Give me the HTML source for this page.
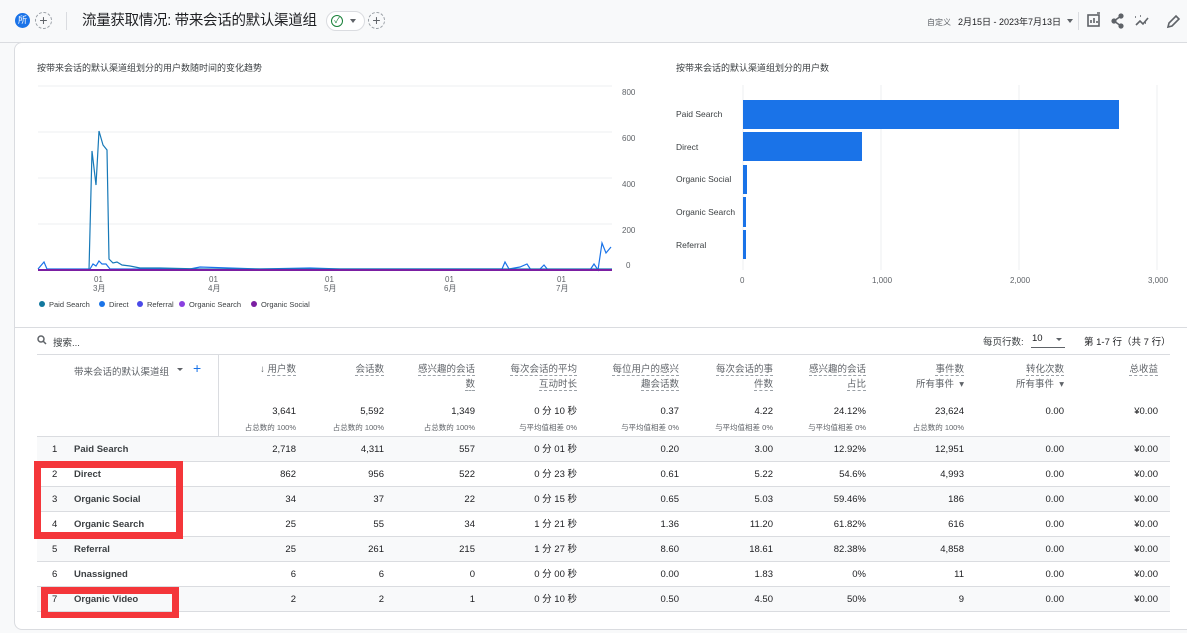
<!DOCTYPE html>
<html><head><meta charset="utf-8"><style>
*{margin:0;padding:0;box-sizing:border-box}
body{width:1187px;height:633px;overflow:hidden;background:#f8f9fa;font-family:"Liberation Sans","Noto Sans CJK SC",sans-serif;color:#202124;position:relative}
.a{position:absolute;white-space:nowrap}
.card{position:absolute;left:14px;top:42px;width:1190px;height:588px;background:#fff;border:1px solid #dadce0;border-radius:8px 0 0 8px}
.s{font-size:9px;color:#3c4043}
.hd{font-size:9.5px;color:#5f6368;text-align:right;line-height:15px}
.hd span{border-bottom:1px dashed #9aa0a6}
.row{position:absolute;left:37px;width:1133px;height:25px;border-bottom:1px solid #dadce0;font-size:9.5px}
.row div{position:absolute;top:7px;line-height:12px;white-space:nowrap}
.full{position:absolute;left:0;width:1187px;font-size:9.5px;line-height:12px}
</style></head><body>
<div class="a" style="left:15px;top:13px;width:15px;height:15px;border-radius:50%;background:#1a73e8;color:#fff;font-size:9px;text-align:center;line-height:15px">所</div>
<div class="a" style="left:35px;top:12px;width:17px;height:17px;border-radius:50%;border:1px dashed #9aa0a6;color:#5f6368;font-size:14px;text-align:center;line-height:14px">+</div>
<div class="a" style="left:66px;top:12px;width:1px;height:18px;background:#dadce0"></div>
<div class="a" style="left:82px;top:11px;font-size:14.5px;line-height:20px;color:#202124;letter-spacing:-0.3px">流量获取情况: 带来会话的默认渠道组</div>
<div class="a" style="left:326px;top:11px;width:39px;height:20px;border:1px solid #dadce0;border-radius:10px;background:#fff"></div>
<div class="a" style="left:331px;top:15px;width:12px;height:12px;border-radius:50%;border:1.5px solid #188038;color:#188038;font-size:8px;line-height:9px;text-align:center">✓</div>
<div class="a" style="left:350px;top:19px;border-left:3px solid transparent;border-right:3px solid transparent;border-top:4px solid #5f6368"></div>
<div class="a" style="left:368px;top:12px;width:17px;height:17px;border-radius:50%;border:1px dashed #9aa0a6;color:#5f6368;font-size:14px;text-align:center;line-height:14px">+</div>
<div class="a" style="left:927px;top:17px;font-size:8px;color:#5f6368">自定义</div>
<div class="a" style="left:958px;top:15px;font-size:9px;color:#202124">2月15日 - 2023年7月13日</div>
<div class="a" style="left:1067px;top:19px;border-left:3px solid transparent;border-right:3px solid transparent;border-top:4px solid #5f6368"></div>
<div class="a" style="left:1078px;top:12px;width:1px;height:18px;background:#dadce0"></div>
<svg class="a" style="left:1086px;top:12px" width="100" height="18" viewBox="0 0 100 18" fill="none" stroke="#5f6368" stroke-width="1.6">
<rect x="2" y="3" width="11" height="11"/><path d="M5 11V8M8 11V6M11 11V9M11 1h3"/>
<circle cx="28" cy="9" r="1.8" fill="#5f6368"/><circle cx="35" cy="4" r="1.8" fill="#5f6368"/><circle cx="35" cy="14" r="1.8" fill="#5f6368"/><path d="M28 9L35 4M28 9L35 14"/>
<path d="M50 13l4-4 3 3 5-6"/><path d="M49 5h1M54 4h1M59 11h1"/>
<path d="M82 15l1-4 7-7 3 3-7 7z"/>
</svg>
<div class="a" style="left:0;top:42px;width:1187px;height:1px;background:#dadce0"></div>
<div class="card"></div>

<div class="a s" style="left:37px;top:61px">按带来会话的默认渠道组划分的用户数随时间的变化趋势</div>
<div class="a s" style="left:676px;top:61px">按带来会话的默认渠道组划分的用户数</div>

<svg class="a" style="left:0;top:0" width="1187" height="320" viewBox="0 0 1187 320">
<g stroke="#eceff1" stroke-width="1">
<path d="M38 86H612M38 132H612M38 178H612M38 224H612"/>
<path d="M743 85V270M881 85V270M1019 85V270M1157 85V270"/>
</g>
<g font-size="8" fill="#5f6368" font-family="Liberation Sans,sans-serif">
<text x="622" y="95">800</text><text x="622" y="141">600</text><text x="622" y="187">400</text><text x="622" y="233">200</text><text x="626" y="268">0</text>
<text x="94" y="282">01</text><text x="93" y="291">3月</text>
<text x="209" y="282">01</text><text x="208" y="291">4月</text>
<text x="325" y="282">01</text><text x="324" y="291">5月</text>
<text x="445" y="282">01</text><text x="444" y="291">6月</text>
<text x="557" y="282">01</text><text x="556" y="291">7月</text>
<text x="740" y="283">0</text><text x="872" y="283">1,000</text><text x="1010" y="283">2,000</text><text x="1148" y="283">3,000</text>
</g>
<polyline fill="none" stroke="#1a73e8" stroke-width="1.2" points="38,269 44,262 47,269 90,269 93,264 96,266 99,261 102,264 106,264 110,269 190,269 200,267 260,269 310,268 340,269 502,269 505,262 509,269 520,267 527,264 531,270 540,269 544,265 548,270 590,270 594,264 598,270 602,243 606,253 611,247"/>
<polyline fill="none" stroke="#1779b8" stroke-width="1.2" points="38,270 89,270 92,151 96,185 99,131 103,145 107,150 109,259 113,263 117,262 122,265 130,266 140,268 160,268 200,269 300,269 612,269"/>
<path d="M38 270H612" stroke="#7b1fa2" stroke-width="2"/>
<g font-size="7.5" fill="#3c4043" font-family="Liberation Sans,sans-serif">
<circle cx="42" cy="304" r="3" fill="#12789e"/><text x="49" y="307">Paid Search</text>
<circle cx="102" cy="304" r="3" fill="#1a73e8"/><text x="109" y="307">Direct</text>
<circle cx="140" cy="304" r="3" fill="#4a4ae8"/><text x="147" y="307">Referral</text>
<circle cx="182" cy="304" r="3" fill="#8a3fe0"/><text x="189" y="307">Organic Search</text>
<circle cx="254" cy="304" r="3" fill="#7b1fa2"/><text x="261" y="307">Organic Social</text>
</g>
<g fill="#1a73e8">
<rect x="743" y="100" width="376" height="29"/><rect x="743" y="132" width="119" height="29"/>
<rect x="743" y="165" width="4" height="29"/><rect x="743" y="197" width="3" height="30"/><rect x="743" y="230" width="3" height="29"/>
</g>
<g font-size="8.5" fill="#3c4043" font-family="Liberation Sans,sans-serif">
<text x="676" y="117">Paid Search</text><text x="676" y="150">Direct</text><text x="676" y="182">Organic Social</text><text x="676" y="215">Organic Search</text><text x="676" y="248">Referral</text>
</g>
</svg>

<div class="a" style="left:14px;top:327px;width:1173px;height:1px;background:#dadce0"></div>
<svg class="a" style="left:37px;top:335px" width="10" height="10" viewBox="0 0 10 10" fill="none" stroke="#5f6368" stroke-width="1.5"><circle cx="4" cy="4" r="3"/><path d="M6 6l3 3"/></svg>
<div class="a" style="left:53px;top:335px;font-size:9.5px;color:#3c4043">搜索...</div>
<div class="a" style="left:983px;top:334px;font-size:9.5px;color:#3c4043">每页行数:</div>
<div class="a" style="left:1032px;top:333px;font-size:9.5px;color:#202124">10</div>
<div class="a" style="left:1031px;top:347px;width:34px;height:1px;background:#5f6368"></div>
<div class="a" style="left:1056px;top:338px;border-left:3px solid transparent;border-right:3px solid transparent;border-top:3px solid #5f6368"></div>
<div class="a" style="left:1084px;top:334px;font-size:9.5px;color:#202124">第 1-7 行（共 7 行）</div>

<div class="a" style="left:37px;top:354px;width:1133px;height:1px;background:#dadce0"></div>
<div class="a" style="left:218px;top:355px;width:1px;height:257px;background:#dadce0"></div>
<div class="a" style="left:74px;top:364px;font-size:9.5px;color:#5f6368">带来会话的默认渠道组</div>
<div class="a" style="left:177px;top:368px;border-left:3px solid transparent;border-right:3px solid transparent;border-top:3px solid #5f6368"></div>
<div class="a" style="left:193px;top:360px;font-size:14px;color:#1a73e8">+</div>

<div class="a hd" style="right:891px;top:362px">↓ <span>用户数</span></div>
<div class="a hd" style="right:803px;top:362px"><span>会话数</span></div>
<div class="a hd" style="right:712px;top:362px;width:70px"><span>感兴趣的会话</span><br><span>数</span></div>
<div class="a hd" style="right:610px;top:362px;width:80px"><span>每次会话的平均</span><br><span>互动时长</span></div>
<div class="a hd" style="right:508px;top:362px;width:80px"><span>每位用户的感兴</span><br><span>趣会话数</span></div>
<div class="a hd" style="right:414px;top:362px;width:80px"><span>每次会话的事</span><br><span>件数</span></div>
<div class="a hd" style="right:321px;top:362px;width:80px"><span>感兴趣的会话</span><br><span>占比</span></div>
<div class="a hd" style="right:223px;top:362px;width:80px"><span>事件数</span><br>所有事件 &nbsp;▾</div>
<div class="a hd" style="right:123px;top:362px;width:80px"><span>转化次数</span><br>所有事件 &nbsp;▾</div>
<div class="a hd" style="right:29px;top:362px"><span>总收益</span></div>

<div class="full" style="top:406px;height:14px">
<div class="a" style="right:891px">3,641</div><div class="a" style="right:803px">5,592</div><div class="a" style="right:712px">1,349</div><div class="a" style="right:610px">0 分 10 秒</div><div class="a" style="right:508px">0.37</div><div class="a" style="right:414px">4.22</div><div class="a" style="right:321px">24.12%</div><div class="a" style="right:223px">23,624</div><div class="a" style="right:123px">0.00</div><div class="a" style="right:29px">¥0.00</div>
</div>
<div class="full" style="top:422px;height:12px;font-size:7.5px;color:#5f6368">
<div class="a" style="right:891px">占总数的 100%</div><div class="a" style="right:803px">占总数的 100%</div><div class="a" style="right:712px">占总数的 100%</div><div class="a" style="right:610px">与平均值相差 0%</div><div class="a" style="right:508px">与平均值相差 0%</div><div class="a" style="right:414px">与平均值相差 0%</div><div class="a" style="right:321px">与平均值相差 0%</div><div class="a" style="right:223px">占总数的 100%</div>
</div>
<div class="a" style="left:37px;top:436px;width:1133px;height:1px;background:#dadce0"></div>

<div id="rows"></div>
<script>
var d=[["1","Paid Search","2,718","4,311","557","0 分 01 秒","0.20","3.00","12.92%","12,951"],
["2","Direct","862","956","522","0 分 23 秒","0.61","5.22","54.6%","4,993"],
["3","Organic Social","34","37","22","0 分 15 秒","0.65","5.03","59.46%","186"],
["4","Organic Search","25","55","34","1 分 21 秒","1.36","11.20","61.82%","616"],
["5","Referral","25","261","215","1 分 27 秒","8.60","18.61","82.38%","4,858"],
["6","Unassigned","6","6","0","0 分 00 秒","0.00","1.83","0%","11"],
["7","Organic Video","2","2","1","0 分 10 秒","0.50","4.50","50%","9"]];
var R=[891,803,712,610,508,414,321,223],h="";
d.forEach(function(r,i){
h+='<div class="row" style="top:'+(437+i*25)+'px;background:'+(i%2==0?'#f8f9fa':'#fff')+'"><div style="left:15px">'+r[0]+'</div><div style="left:37px;font-weight:bold;color:#3c4043">'+r[1]+'</div>';
for(var j=0;j<8;j++)h+='<div style="right:'+(R[j]-17)+'px">'+r[j+2]+'</div>';
h+='<div style="right:'+(123-17)+'px">0.00</div><div style="right:'+(29-17)+'px">¥0.00</div></div>';
});
document.getElementById('rows').innerHTML=h;
</script>
<div class="a" style="left:34px;top:461px;width:149px;height:78px;border:7px solid #f4363a"></div>
<div class="a" style="left:41px;top:587px;width:138px;height:31px;border:7px solid #f4363a;border-bottom-width:6px"></div>
</body></html>
